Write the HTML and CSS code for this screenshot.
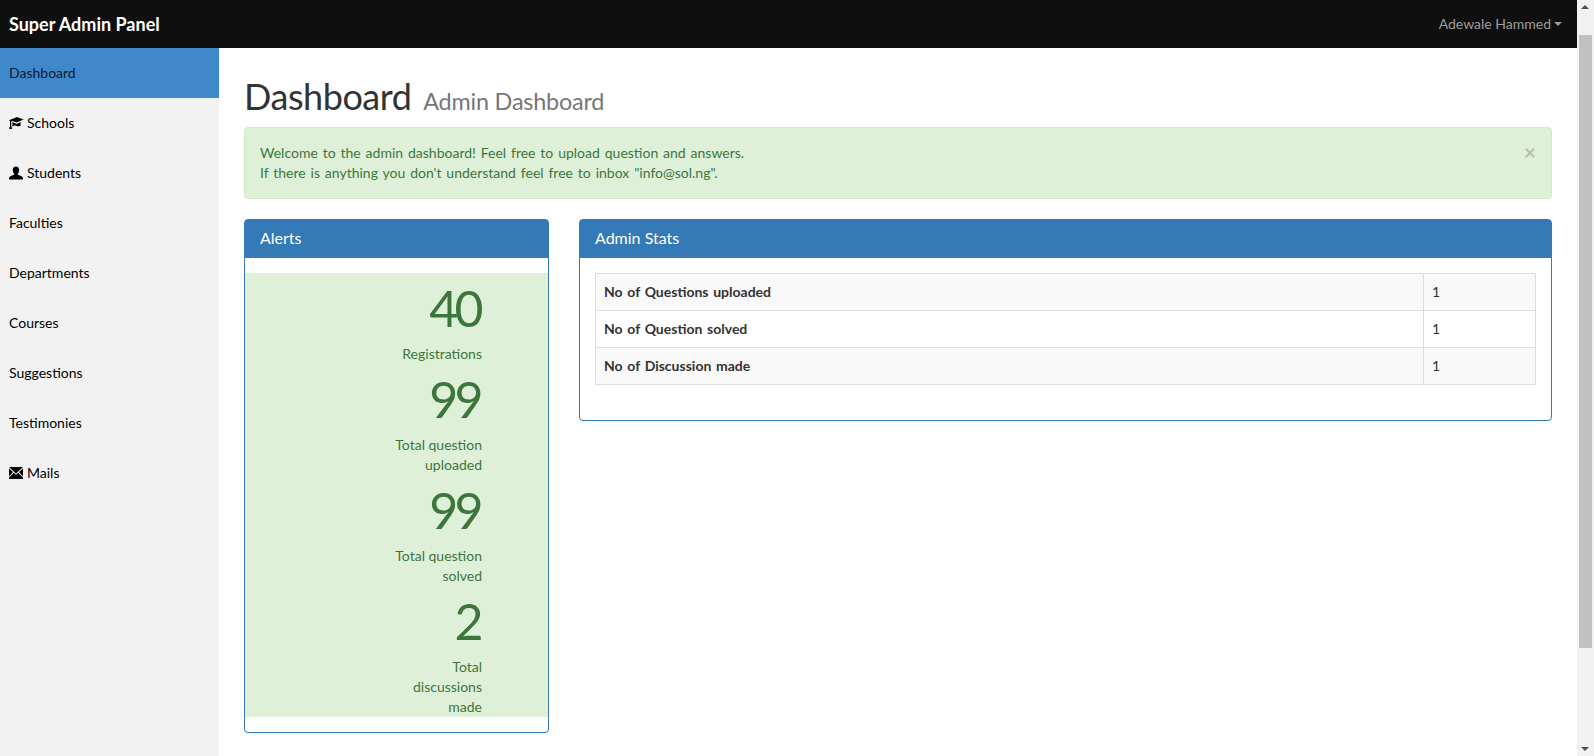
FILE: index.html
```html
<!DOCTYPE html>
<html lang="en">
<head>
<meta charset="utf-8">
<title>Super Admin Panel</title>
<link rel="stylesheet" href="styles.css">
</head>
<body>
<div class="viewport">
  <div class="page">
    <header class="navbar">
      <a class="brand">Super Admin Panel</a>
      <a class="user">Adewale Hammed<span class="caret"></span></a>
    </header>
    <div class="layout">
      <nav class="sidebar">
        <a class="nav-item active">Dashboard</a>
        <a class="nav-item"><svg class="icon" viewBox="0 0 14 14"><path d="M0 4.2 8 1 14.5 3.4 7.8 6.6 3.6 4.9 2.2 5.5V9.8L3.2 13H0.2L1 9.8V5Z"/><path d="M3.4 6 7.8 7.9 11.6 6.1V9.4C10 10.8 8.4 10.2 7 9.7 5.6 9.2 4.4 9.6 3.4 10.8Z"/></svg> Schools</a>
        <a class="nav-item"><svg class="icon" viewBox="0 0 14 14"><path d="M7 0.6C9 0.6 10.2 2 10.2 4 10.2 5.6 9.6 7 8.8 7.8V8.8C10.6 9.6 14 10.2 14 12.4V13.4H0V12.4C0 10.2 3.4 9.6 5.2 8.8V7.8C4.4 7 3.8 5.6 3.8 4 3.8 2 5 0.6 7 0.6Z"/></svg> Students</a>
        <a class="nav-item">Faculties</a>
        <a class="nav-item">Departments</a>
        <a class="nav-item">Courses</a>
        <a class="nav-item">Suggestions</a>
        <a class="nav-item">Testimonies</a>
        <a class="nav-item"><svg class="icon" viewBox="0 0 14 12"><path d="M0 0H14L7 6.4Z"/><path d="M0 1.4 4 5 0 9.6Z"/><path d="M14 1.4 10 5 14 9.6Z"/><path d="M0 12V10.8L4.8 5.8 7 7.8 9.2 5.8 14 10.8V12Z"/></svg> Mails</a>
      </nav>
      <main class="content">
        <h1 class="title">Dashboard <small>Admin Dashboard</small></h1>
        <div class="alert">
          <span class="close">×</span>
          Welcome to the admin dashboard! Feel free to upload question and answers.<br>
          If there is anything you don't understand feel free to inbox "info@sol.ng".
        </div>
        <div class="columns">
          <section class="panel panel-side">
            <div class="panel-heading">Alerts</div>
            <div class="panel-body">
              <div class="stats">
                <div class="stat"><div class="num">40</div><div class="label">Registrations</div></div>
                <div class="stat"><div class="num">99</div><div class="label">Total question<br>uploaded</div></div>
                <div class="stat"><div class="num">99</div><div class="label">Total question<br>solved</div></div>
                <div class="stat"><div class="num">2</div><div class="label">Total<br>discussions<br>made</div></div>
              </div>
            </div>
          </section>
          <section class="panel panel-main">
            <div class="panel-heading">Admin Stats</div>
            <div class="panel-body">
              <table class="table">
                <tr><th>No of Questions uploaded</th><td>1</td></tr>
                <tr><th>No of Question solved</th><td>1</td></tr>
                <tr><th>No of Discussion made</th><td>1</td></tr>
              </table>
            </div>
          </section>
        </div>
      </main>
    </div>
  </div>
  <div class="scrollbar">
    <span class="arrow arrow-up"></span>
    <span class="thumb"></span>
    <span class="arrow arrow-down"></span>
  </div>
</div>
</body>
</html>
```
FILE: styles.css
```css
* { box-sizing: border-box; }
html, body { margin: 0; height: 100%; overflow: hidden; }
body { font-family: "Lato", "Noto Sans", sans-serif; font-size: 14px; line-height: 20px; color: #333; background: #fff; }
.viewport { display: flex; height: 756px; }
.page { flex: 1; display: flex; flex-direction: column; min-width: 0; }
.navbar { height: 48px; flex: none; background: #0f0f0f; display: flex; justify-content: space-between; align-items: center; padding: 0 15px 0 9px; }
.brand { color: #fff; font-size: 18px; font-weight: 700; }
.user { color: #9d9d9d; display: flex; align-items: center; }
.caret { width: 0; height: 0; margin-left: 3px; border-top: 4px solid #9d9d9d; border-left: 4px solid transparent; border-right: 4px solid transparent; }
.layout { flex: 1; display: flex; min-height: 0; }
.sidebar { width: 219px; flex: none; background: #f2f2f2; }
.nav-item { display: flex; align-items: center; gap: 4px; height: 50px; padding-left: 9px; color: #000; }
.nav-item.active { background: #3f89ca; color: #0b1a2b; }
.icon { width: 14px; height: 14px; fill: #000; flex: none; overflow: visible; }
.content { flex: 1; min-width: 0; padding: 28px 25px 0; }
.title { margin: 0 0 11px; height: 40px; font-size: 36px; line-height: 40px; font-weight: 400; color: #333; letter-spacing: -.45px; white-space: nowrap; }
.title small { font-size: 23.4px; line-height: 1; color: #777; letter-spacing: -.2px; margin-left: 3px; }
.alert { position: relative; padding: 15px; height: 72px; margin-bottom: 20px; background: #dff0d8; border: 1px solid #d6e9c6; border-radius: 4px; color: #3c763d; word-spacing: 1.3px; }
.close { position: absolute; top: 14px; right: 15px; font-size: 21px; font-weight: 700; line-height: 20px; color: #000; opacity: .2; }
.columns { display: flex; gap: 30px; align-items: flex-start; }
.panel { border: 1px solid #337ab7; border-radius: 4px; background: #fff; box-shadow: 0 1px 1px rgba(0,0,0,.05); }
.panel-side { width: 305px; flex: none; }
.panel-main { flex: 1; min-width: 0; }
.panel-heading { background: #337ab7; color: #fff; font-size: 16px; height: 38px; line-height: 36px; padding: 0 15px; }
.panel-body { padding: 15px 0; }
.panel-main .panel-body { padding: 15px 15px 35px; }
.stats { background: #dff0d8; color: #3c763d; height: 444px; padding-right: 66px; text-align: right; }
.num { font-size: 50px; line-height: 71px; letter-spacing: -3.6px; margin-right: 2px; }
.table { width: 100%; border-collapse: collapse; word-spacing: 1.3px; }
.table th, .table td { border: 1px solid #ddd; padding: 8px; line-height: 20px; text-align: left; color: #333; }
.table th { font-weight: 700; }
.table td { width: 112px; }
.table tr:nth-child(odd) { background: #f9f9f9; }
.scrollbar { width: 17px; flex: none; background: #f1f1f1; position: relative; display: flex; flex-direction: column; align-items: center; }
.thumb { position: absolute; top: 35px; left: 2px; width: 13px; height: 613px; background: #c1c1c1; }
.arrow { position: absolute; left: 4px; width: 0; height: 0; border-left: 4px solid transparent; border-right: 4px solid transparent; }
.arrow-up { top: 5px; border-bottom: 4px solid #505050; }
.arrow-down { bottom: 5px; border-top: 4px solid #505050; }
```
